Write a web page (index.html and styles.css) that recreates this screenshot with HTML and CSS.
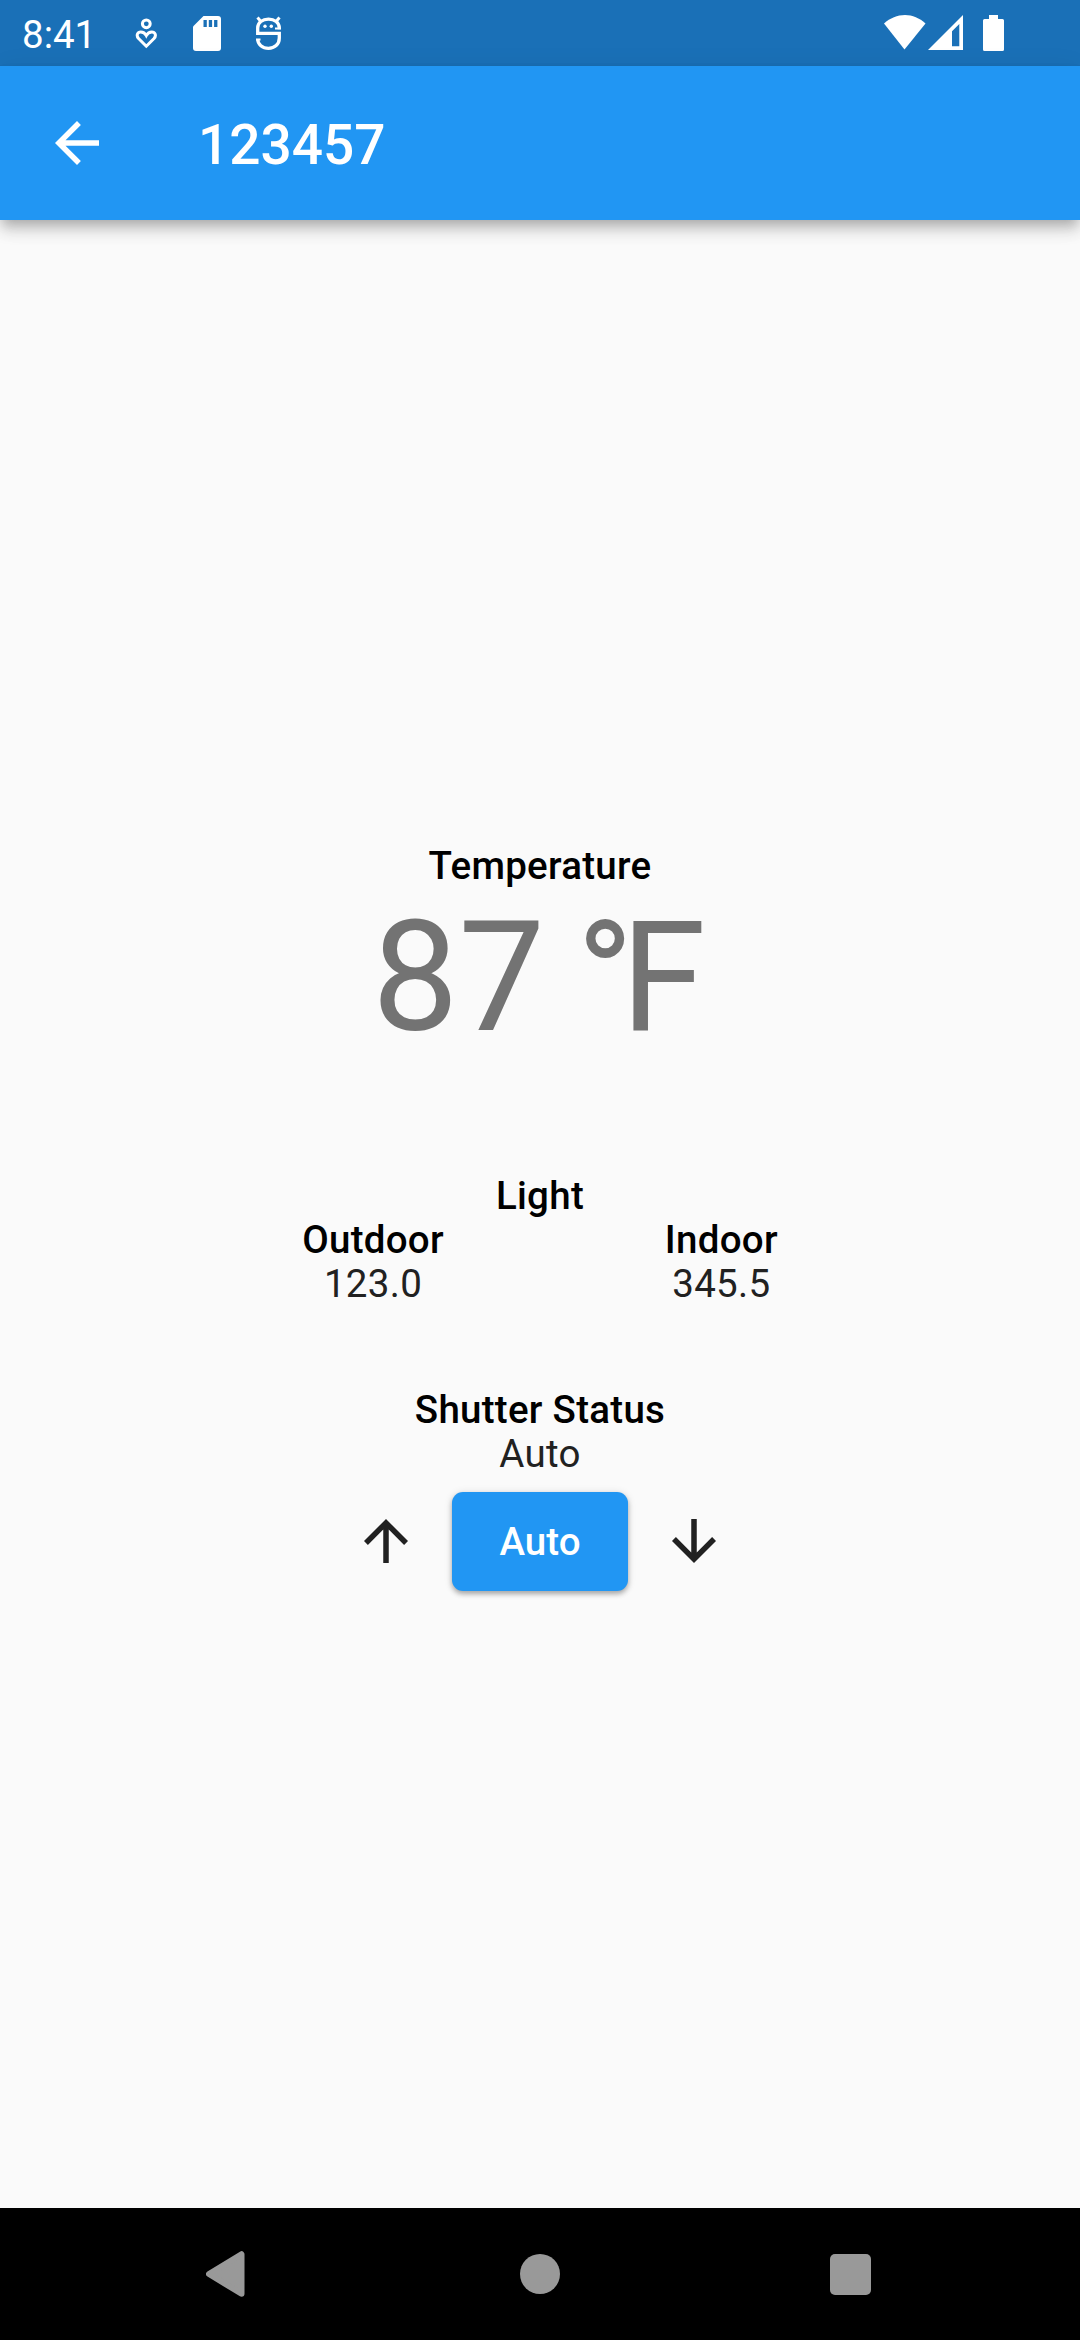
FILE: index.html
```html
<!DOCTYPE html>
<html lang="en">
<head>
<meta charset="utf-8">
<title>123457</title>
<link rel="stylesheet" href="styles.css">
</head>
<body>
<div class="screen">
  <header class="status-bar">
    <span class="clock">8:41</span>
    <svg class="icon-heart" width="24" height="32" viewBox="0 0 24 32" fill="none" stroke="#fff" stroke-width="3">
      <circle cx="11.300" cy="6.800" r="3.900"/>
      <path d="M11.300 29.200 3.600 21.500C.8 18.300 2.600 15 5.800 15 8.600 15 10.200 16.600 11.300 18.600 12.400 16.600 14 15 16.800 15 20 15 21.800 18.300 19 21.500Z"/>
    </svg>
    <svg class="icon-sd" width="28" height="35" viewBox="0 0 28 35">
      <path fill="#fff" d="M10.500 0H25a3 3 0 0 1 3 3v29a3 3 0 0 1-3 3H3a3 3 0 0 1-3-3V10.500Z"/>
      <path fill="#1a70b7" d="M10.500 4h3.300v7h-3.300zM15.800 4h3.300v7h-3.300zM21.100 4h3.300v7h-3.300z"/>
    </svg>
    <svg class="icon-debug" width="28" height="36" viewBox="0 0 28 36" fill="none" stroke="#fff" stroke-width="3.300">
      <path d="M5.500 6 2.500 2.500M21.500 6 24.500 2.500" stroke-width="3"/>
      <path d="M24.300 14.300V13C24.300 7.500 19.500 4.200 13.500 4.200S2.700 7.500 2.700 13V18.400H24.300V23C24.300 29.500 19.500 33.300 13.500 33.300S2.700 29.500 2.700 24"/>
      <path d="M20 13.500h6M1 24.600h4.500" stroke-width="2"/>
      <circle cx="10" cy="11.300" r="1.700" fill="#fff" stroke="none"/>
      <circle cx="16.300" cy="11.300" r="1.700" fill="#fff" stroke="none"/>
    </svg>
    <span class="spacer"></span>
    <svg class="icon-wifi" width="42" height="35" viewBox="0 0 42 35">
      <path fill="#fff" d="M21 0C13.500 0 6 3 0 8.500L20.500 34.500 41.500 8.500C35.500 3 28.500 0 21 0Z"/>
    </svg>
    <svg class="icon-signal" width="35" height="35" viewBox="0 0 35 35">
      <path fill="#fff" fill-rule="evenodd" d="M35 0V35H0ZM31.300 9 24 16.200V31.300H31.300Z"/>
    </svg>
    <svg class="icon-battery" width="21" height="36" viewBox="0 0 21 36">
      <path fill="#fff" d="M6 0h9v4h4.500A1.500 1.500 0 0 1 21 5.500v29a1.500 1.500 0 0 1-1.500 1.500h-18A1.500 1.500 0 0 1 0 34.500v-29A1.500 1.500 0 0 1 1.500 4H6Z"/>
    </svg>
  </header>

  <div class="app-bar">
    <svg class="icon back" viewBox="0 0 24 24"><path d="M20 11H7.830l5.590-5.590L12 4l-8 8 8 8 1.410-1.410L7.830 13H20v-2z"/></svg>
    <h1 class="title">123457</h1>
  </div>

  <main class="content">
    <section class="temperature">
      <h2 class="label">Temperature</h2>
      <p class="reading">87<span class="unit-gap"> </span><span class="degree">°</span>F</p>
    </section>
    <section class="light">
      <h2 class="label">Light</h2>
      <div class="sensors">
        <div class="sensor"><h3 class="label">Outdoor</h3><p class="value">123.0</p></div>
        <div class="sensor"><h3 class="label">Indoor</h3><p class="value">345.5</p></div>
      </div>
    </section>
    <section class="shutter">
      <h2 class="label">Shutter Status</h2>
      <p class="value">Auto</p>
      <div class="controls">
        <button class="icon-button" aria-label="Open"><svg class="icon" viewBox="0 0 24 24"><path d="M4 12l1.410 1.410L11 7.830V20h2V7.830l5.580 5.590L20 12l-8-8-8 8z"/></svg></button>
        <button class="auto-button">Auto</button>
        <button class="icon-button" aria-label="Close"><svg class="icon" viewBox="0 0 24 24"><path d="M20 12l-1.410-1.410L13 16.170V4h-2v12.170l-5.580-5.590L4 12l8 8 8-8z"/></svg></button>
      </div>
    </section>
  </main>

  <nav class="nav-bar">
    <svg class="nav-back" width="39" height="46" viewBox="0 0 39 46"><path d="M3 23 35.500 3.200V42.800Z" fill="#999" stroke="#999" stroke-width="6" stroke-linejoin="round"/></svg>
    <span class="nav-home"></span>
    <span class="nav-recent"></span>
  </nav>
</div>
</body>
</html>
```
FILE: styles.css
```css
* {
  box-sizing: border-box;
  margin: 0;
  padding: 0;
}

body {
  font-family: Roboto, sans-serif;
  background: #fafafa;
}

.screen {
  display: flex;
  flex-direction: column;
  width: 1080px;
  height: 2340px;
  overflow: hidden;
}

svg {
  display: block;
  flex: none;
}

/* System status bar */
.status-bar {
  display: flex;
  align-items: flex-start;
  flex: none;
  height: 66px;
  padding: 0 76px 0 22px;
  background: #1a70b7;
  color: #fff;
}

.clock {
  width: 113px;
  padding-top: 12px;
  font-size: 38.5px;
  line-height: 45px;
}

.icon-heart { margin-top: 17px; }
.icon-sd { margin: 16px 0 0 34px; }
.icon-debug { margin: 15px 0 0 34px; }
.spacer { flex: 1; }
.icon-wifi { margin-top: 15px; }
.icon-signal { margin: 15px 0 0 2px; }
.icon-battery { margin: 15px 0 0 20px; }

/* App bar */
.app-bar {
  display: flex;
  align-items: center;
  flex: none;
  height: 154px;
  padding-left: 44px;
  gap: 88px;
  background: #2196f3;
  color: #fff;
  box-shadow: 0 5.500px 11px -2.750px rgba(0, 0, 0, 0.2),
    0 11px 14px 0 rgba(0, 0, 0, 0.14),
    0 3px 27px 0 rgba(0, 0, 0, 0.06);
}

.icon {
  width: 66px;
  height: 66px;
  fill: currentColor;
}

.title {
  padding-top: 3px;
  font-size: 55px;
  font-weight: 500;
  line-height: 64px;
}

/* Readings */
.content {
  display: flex;
  flex-direction: column;
  align-items: center;
  flex: 1;
  padding-top: 624px;
  text-align: center;
  color: #212121;
}

.label,
.value {
  font-size: 38.5px;
  line-height: 44px;
}

.label {
  color: #000;
  font-weight: 500;
  letter-spacing: 0.275px;
}

.value {
  letter-spacing: 0.3px;
}

.reading {
  height: 180px;
  padding-right: 2px;
  font-size: 154px;
  line-height: 180px;
  color: #737373;
}

.unit-gap { letter-spacing: -7px; }
.degree { letter-spacing: -13px; }

.light { margin-top: 106px; }

.sensors {
  display: flex;
  justify-content: center;
  gap: 221px;
}

.shutter { margin-top: 82px; }

.controls {
  display: flex;
  align-items: center;
  height: 132px;
  margin-top: -1px;
}

button {
  border: 0;
  background: none;
  font: inherit;
  color: inherit;
}

.icon-button {
  display: grid;
  place-items: center;
  width: 132px;
  height: 132px;
}

.auto-button {
  width: 176px;
  height: 99px;
  border-radius: 11px;
  background: #2196f3;
  color: #fff;
  font-size: 38.5px;
  font-weight: 500;
  letter-spacing: 0;
  box-shadow: 0 3px 5px rgba(0, 0, 0, 0.28), 0 1px 9px rgba(0, 0, 0, 0.12);
}

/* System navigation */
.nav-bar {
  display: flex;
  align-items: center;
  flex: none;
  height: 132px;
  padding-left: 206px;
  background: #000;
}

.nav-home {
  width: 40px;
  height: 40px;
  margin-left: 275px;
  border-radius: 50%;
  background: #999;
}

.nav-recent {
  width: 41px;
  height: 41px;
  margin-left: 270px;
  border-radius: 5px;
  background: #999;
}
```
